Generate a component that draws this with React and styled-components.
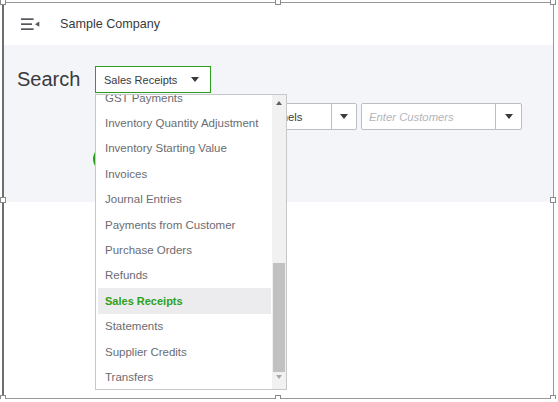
import React from "react";
import styled, { createGlobalStyle } from "styled-components";

const GlobalStyle = createGlobalStyle`
	body {
		margin: 0;
		background: #ffffff;
		font-family: "Liberation Sans", Arial, sans-serif;
	}
`;

const transactionTypes = [
	"GST Payments",
	"Inventory Quantity Adjustment",
	"Inventory Starting Value",
	"Invoices",
	"Journal Entries",
	"Payments from Customer",
	"Purchase Orders",
	"Refunds",
	"Sales Receipts",
	"Statements",
	"Supplier Credits",
	"Transfers",
];

const handles = [
	[3, 2],
	[277.5, 2],
	[553, 2],
	[3, 200],
	[553, 200],
	[3, 398],
	[277.5, 398],
	[553, 398],
];

const MenuIcon = () => (
	<svg width="20" height="14" viewBox="0 0 20 14">
		<rect x="1" y="1.3" width="12.6" height="1.7" fill="#55575d" />
		<rect x="1" y="6.3" width="11" height="1.7" fill="#55575d" />
		<rect x="1" y="11.3" width="12.6" height="1.7" fill="#55575d" />
		<polygon points="15,7.2 19.3,4.6 19.3,9.8" fill="#55575d" />
	</svg>
);

const Caret = () => (
	<svg width="8" height="5" viewBox="0 0 8 5">
		<polygon points="0,0 8,0 4,5" fill="#393a3d" />
	</svg>
);

const App = () => {
	const selected = "Sales Receipts";
	return (
		<>
			<GlobalStyle />
			<Frame>
				{handles.map(([x, y]) => (
					<Handle key={`${x}-${y}`} $x={x} $y={y} />
				))}
				<Header>
					<MenuIcon />
					<CompanyName>Sample Company</CompanyName>
				</Header>
				<Panel>
					<Row>
						<Title>Search</Title>
						<TypeSelect>
							<span>{selected}</span>
							<Caret />
							<Dropdown>
								<List>
									<ListInner>
										{transactionTypes.map((t) => (
											<Item key={t} $active={t === selected}>
												{t}
											</Item>
										))}
									</ListInner>
								</List>
								<Scrollbar>
									<ArrowUp />
									<Thumb />
									<ArrowDown />
								</Scrollbar>
							</Dropdown>
						</TypeSelect>
					</Row>
					<Row $indent={78} $top={10}>
						<Combo $w={129}>
							<ComboText>All Dates</ComboText>
							<ComboButton>
								<Caret />
							</ComboButton>
						</Combo>
						<Combo $w={129}>
							<ComboText>All Channels</ComboText>
							<ComboButton>
								<Caret />
							</ComboButton>
						</Combo>
						<Combo $w={161}>
							<ComboText $placeholder>Enter Customers</ComboText>
							<ComboButton $w={26}>
								<Caret />
							</ComboButton>
						</Combo>
					</Row>
					<Row $indent={76} $top={17}>
						<GreenButton>Search</GreenButton>
					</Row>
				</Panel>
			</Frame>
		</>
	);
};

export default App;

const Frame = styled.div`
	position: relative;
	box-sizing: border-box;
	margin: 2px 0 0 2px;
	width: 552px;
	height: 397px;
	border: 1px solid #979797;
	border-left: 2px solid #6e6e6e;
	display: flex;
	flex-direction: column;
	background: #ffffff;
`;

const Handle = styled.span`
	position: absolute;
	left: ${(p) => p.$x - 7}px;
	top: ${(p) => p.$y - 6}px;
	width: 6px;
	height: 6px;
	box-sizing: border-box;
	border: 1px solid #8a8a8a;
	background: #ffffff;
	z-index: 20;
`;

const Header = styled.header`
	height: 42px;
	flex-shrink: 0;
	display: flex;
	align-items: center;
	gap: 20px;
	padding-left: 16px;
	background: #ffffff;
`;

const CompanyName = styled.span`
	font-size: 12.6px;
	color: #393a3d;
`;

const Panel = styled.section`
	height: 157px;
	flex-shrink: 0;
	box-sizing: border-box;
	padding: 21px 0 0 13px;
	background: #f4f5f8;
	display: flex;
	flex-direction: column;
`;

const Row = styled.div`
	display: flex;
	align-items: center;
	gap: 4px;
	margin-left: ${(p) => p.$indent || 0}px;
	margin-top: ${(p) => p.$top || 0}px;
`;

const Title = styled.h1`
	margin: 0;
	width: 74px;
	font-size: 20px;
	font-weight: 400;
	color: #393a3d;
`;

const TypeSelect = styled.div`
	position: relative;
	box-sizing: border-box;
	width: 116px;
	height: 27px;
	padding: 0 11px 0 8px;
	border: 1px solid #2ca01c;
	background: #ffffff;
	display: flex;
	align-items: center;
	justify-content: space-between;
	font-size: 11px;
	color: #393a3d;
`;

const Dropdown = styled.div`
	position: absolute;
	top: calc(100% + 2px);
	left: -1px;
	width: 192px;
	height: 296px;
	box-sizing: border-box;
	border: 1px solid #c6c7ca;
	background: #ffffff;
	display: flex;
	z-index: 10;
`;

const List = styled.div`
	flex: 1;
	overflow: hidden;
	padding: 0 1px 0 2px;
`;

const ListInner = styled.div`
	margin-top: -10px;
`;

const Item = styled.div`
	height: 25.4px;
	display: flex;
	align-items: center;
	padding-left: 7px;
	font-size: ${(p) => (p.$active ? 11 : 11.5)}px;
	white-space: nowrap;
	color: ${(p) => (p.$active ? "#2ca01c" : "#6b6c72")};
	font-weight: ${(p) => (p.$active ? 700 : 400)};
	background: ${(p) => (p.$active ? "#ececee" : "transparent")};
`;

const Scrollbar = styled.div`
	width: 14px;
	background: #f1f1f1;
	display: flex;
	flex-direction: column;
	align-items: center;
`;

const ArrowUp = styled.span`
	margin-top: 6px;
	width: 0;
	height: 0;
	border-left: 3.5px solid transparent;
	border-right: 3.5px solid transparent;
	border-bottom: 4px solid #606060;
`;

const Thumb = styled.div`
	margin-top: 158px;
	width: 12px;
	height: 109px;
	background: #c1c1c1;
`;

const ArrowDown = styled.span`
	margin-top: 3px;
	width: 0;
	height: 0;
	border-left: 3.5px solid transparent;
	border-right: 3.5px solid transparent;
	border-top: 4px solid #a8a8a8;
`;

const Combo = styled.div`
	box-sizing: border-box;
	width: ${(p) => p.$w}px;
	height: 27px;
	border: 1px solid #babec5;
	border-radius: 2px;
	background: #ffffff;
	display: flex;
`;

const ComboText = styled.span`
	flex: 1;
	display: flex;
	align-items: center;
	padding-left: ${(p) => (p.$placeholder ? 7 : 10)}px;
	font-size: 11.3px;
	font-style: ${(p) => (p.$placeholder ? "italic" : "normal")};
	color: ${(p) => (p.$placeholder ? "#b3b5ba" : "#393a3d")};
	white-space: nowrap;
	overflow: hidden;
`;

const ComboButton = styled.span`
	box-sizing: border-box;
	width: ${(p) => p.$w || 25}px;
	border-left: 1px solid #babec5;
	display: flex;
	align-items: center;
	justify-content: center;
`;

const GreenButton = styled.button`
	width: 90px;
	height: 24px;
	border: none;
	border-radius: 12px;
	background: #2ca01c;
	color: #ffffff;
	font-family: inherit;
	font-size: 12px;
	font-weight: 700;
`;
